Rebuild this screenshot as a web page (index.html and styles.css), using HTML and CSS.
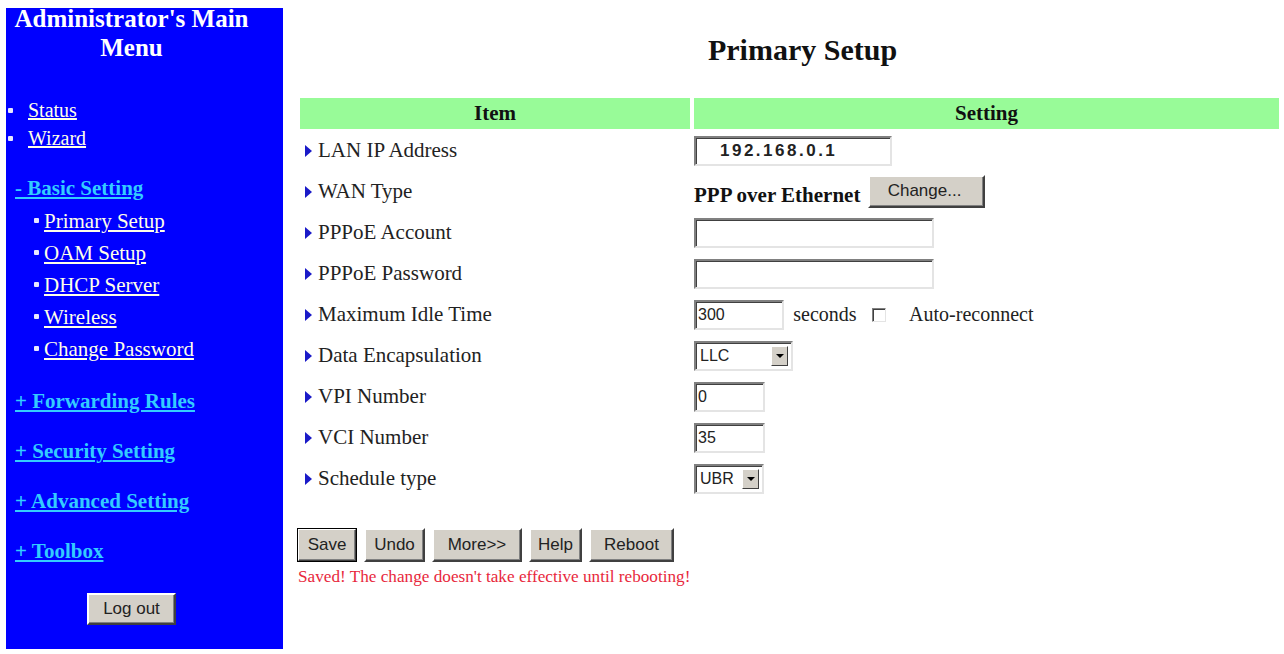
FILE: index.html
```html
<!DOCTYPE html>
<html lang="en">
<head>
    <meta charset="UTF-8">
    <title>Primary Setup</title>
    <link rel="stylesheet" href="styles.css">
</head>
<body>
    <div class="page">
        <nav class="menu">
            <h2 class="menu-title">Administrator's Main<br>Menu</h2>
            <ul class="top-links">
                <li><a href="#">Status</a></li>
                <li><a href="#">Wizard</a></li>
            </ul>
            <a class="group" href="#">- Basic Setting</a>
            <ul class="sub-links">
                <li><a href="#">Primary Setup</a></li>
                <li><a href="#">OAM Setup</a></li>
                <li><a href="#">DHCP Server</a></li>
                <li><a href="#">Wireless</a></li>
                <li><a href="#">Change Password</a></li>
            </ul>
            <a class="group" href="#">+ Forwarding Rules</a>
            <a class="group" href="#">+ Security Setting</a>
            <a class="group" href="#">+ Advanced Setting</a>
            <a class="group" href="#">+ Toolbox</a>
            <div class="logout">
                <button class="btn">Log out</button>
            </div>
        </nav>

        <main class="content">
            <h1>Primary Setup</h1>
            <table class="setup">
                <tr>
                    <th class="col-item">Item</th>
                    <th>Setting</th>
                </tr>
                <tr>
                    <td class="label">LAN IP Address</td>
                    <td><input class="field ip" type="text" value="192.168.0.1"></td>
                </tr>
                <tr>
                    <td class="label">WAN Type</td>
                    <td><b class="wan">PPP over Ethernet</b> <button class="btn change">Change...</button></td>
                </tr>
                <tr>
                    <td class="label">PPPoE Account</td>
                    <td><input class="field wide" type="text"></td>
                </tr>
                <tr>
                    <td class="label">PPPoE Password</td>
                    <td><input class="field wide" type="password"></td>
                </tr>
                <tr>
                    <td class="label">Maximum Idle Time</td>
                    <td>
                        <input class="field idle" type="text" value="300">
                        <span class="note">seconds</span>
                        <span class="check"></span>
                        <span class="note">Auto-reconnect</span>
                    </td>
                </tr>
                <tr>
                    <td class="label">Data Encapsulation</td>
                    <td><span class="select encap"><span class="val">LLC</span><span class="arrow"></span></span></td>
                </tr>
                <tr>
                    <td class="label">VPI Number</td>
                    <td><input class="field short" type="text" value="0"></td>
                </tr>
                <tr>
                    <td class="label">VCI Number</td>
                    <td><input class="field short" type="text" value="35"></td>
                </tr>
                <tr>
                    <td class="label">Schedule type</td>
                    <td><span class="select sched"><span class="val">UBR</span><span class="arrow"></span></span></td>
                </tr>
            </table>

            <div class="actions">
                <button class="btn default save">Save</button>
                <button class="btn undo">Undo</button>
                <button class="btn more">More&gt;&gt;</button>
                <button class="btn help">Help</button>
                <button class="btn reboot">Reboot</button>
            </div>
            <p class="saved">Saved! The change doesn't take effective until rebooting!</p>
        </main>
    </div>
</body>
</html>
```

FILE: styles.css
```css
body {
    margin: 0;
    background-color: white;
    font-family: "Liberation Serif", "Times New Roman", serif;
}
.page {
    display: flex;
    align-items: flex-start;
}

/* left menu */
.menu {
    width: 277px;
    height: 641px;
    margin: 8px 0 0 6px;
    background-color: #0000ff;
    box-sizing: border-box;
}
.menu-title {
    margin: -4px 0 0;
    padding-right: 26px;
    color: white;
    font-size: 25px;
    line-height: 29px;
    text-align: center;
}
.menu a {
    color: #ffffe8;
}
.top-links {
    list-style: none;
    margin: 34px 0 0;
    padding: 0;
}
.top-links li {
    position: relative;
    padding-left: 22px;
    font-size: 20px;
    line-height: 28px;
}
.top-links li::before,
.sub-links li::before {
    content: "";
    position: absolute;
    width: 5px;
    height: 5px;
    border-radius: 1px;
    background-color: #e8e8ff;
}
.top-links li::before {
    left: 2px;
    top: 12px;
}
.sub-links {
    list-style: none;
    margin: 0;
    padding: 0;
}
.sub-links li {
    position: relative;
    padding-left: 38px;
    font-size: 21px;
    line-height: 32px;
}
.sub-links li::before {
    left: 28px;
    top: 13px;
}
.menu .group {
    display: block;
    margin-top: 16px;
    padding-left: 9px;
    color: #33ccff;
    font-weight: bold;
    font-size: 21px;
    line-height: 34px;
}
.top-links + .group {
    margin-top: 19px;
}
.sub-links + .group {
    margin-top: 19px;
}
.logout {
    margin-top: 25px;
    padding-right: 26px;
    text-align: center;
}
.logout .btn {
    width: 89px;
    height: 32px;
    font-size: 17px;
}

/* buttons and fields */
.btn {
    background-color: #d4d0c8;
    font-family: "Liberation Sans", Arial, sans-serif;
    font-size: 17px;
    color: #222;
    height: 34px;
    padding: 0;
    border: 2px solid;
    border-color: #ffffff #404040 #404040 #ffffff;
    box-shadow: inset -1px -1px #808080;
}
.btn.default {
    outline: 1px solid #000;
    outline-offset: -1px;
}
.field {
    height: 30px;
    box-sizing: border-box;
    padding: 2px 2px;
    font-family: "Liberation Sans", Arial, sans-serif;
    font-size: 16px;
    color: #222;
    border: 2px solid;
    border-color: #808080 #e4e4e4 #e4e4e4 #808080;
    box-shadow: inset 1px 1px #404040;
    vertical-align: middle;
}
.field.ip {
    width: 198px;
    padding-left: 24px;
    font-size: 17px;
    font-weight: bold;
    letter-spacing: 2.5px;
}
.field.wide {
    width: 240px;
}
.field.idle {
    width: 90px;
}
.field.short {
    width: 71px;
}
.select {
    display: inline-flex;
    align-items: center;
    justify-content: space-between;
    height: 30px;
    box-sizing: border-box;
    padding: 0 3px 0 4px;
    font-family: "Liberation Sans", Arial, sans-serif;
    font-size: 16px;
    color: #222;
    border: 2px solid;
    border-color: #808080 #e4e4e4 #e4e4e4 #808080;
    box-shadow: inset 1px 1px #404040;
    vertical-align: middle;
}
.select.encap {
    width: 99px;
}
.select.sched {
    width: 70px;
}
.select .arrow {
    position: relative;
    width: 17px;
    height: 20px;
    box-sizing: border-box;
    background-color: #d4d0c8;
    border: 1px solid;
    border-color: #ffffff #404040 #404040 #ffffff;
}
.select .arrow::after {
    content: "";
    position: absolute;
    left: 4px;
    top: 7px;
    border-left: 4px solid transparent;
    border-right: 4px solid transparent;
    border-top: 4px solid #000;
}

/* main content */
.content {
    flex: 1;
    padding: 0 5px 0 17px;
}
h1 {
    margin: 32px 0 28px;
    padding-left: 26px;
    font-size: 30px;
    line-height: 36px;
    text-align: center;
    color: #111;
}
.setup {
    width: 100%;
    border-spacing: 0 2px;
    margin: 0;
}
.setup th {
    height: 31px;
    padding: 0;
    background-color: #98fb98;
    font-size: 21px;
    color: #111;
    border-left: 4px solid white;
}
.setup th.col-item {
    width: 390px;
    border-left: none;
}
.setup td {
    height: 39px;
    padding: 0;
    font-size: 21px;
    color: #222;
}
.setup td:last-child {
    padding-left: 4px;
}
.label {
    padding-left: 18px !important;
    position: relative;
}
.label::before {
    content: "";
    position: absolute;
    left: 5px;
    top: 14px;
    border-top: 6px solid transparent;
    border-bottom: 6px solid transparent;
    border-left: 7px solid #1a1ac8;
}
.wan {
    font-size: 21px;
    color: #111;
    vertical-align: middle;
}
.btn.change {
    width: 117px;
    height: 33px;
    margin-left: 2px;
    text-align: left;
    padding-left: 18px;
    vertical-align: 4px;
}
.note {
    font-size: 20px;
    margin-left: 4px;
    vertical-align: middle;
}
.check {
    display: inline-block;
    width: 14px;
    height: 14px;
    box-sizing: border-box;
    margin: 0 14px 0 10px;
    background-color: white;
    border: 1px solid;
    border-color: #808080 #e4e4e4 #e4e4e4 #808080;
    box-shadow: inset 1px 1px #404040;
    vertical-align: middle;
}
.actions {
    display: flex;
    gap: 7px;
    margin-top: 28px;
}
.actions .save {
    width: 60px;
    margin-left: -3px;
}
.actions .undo {
    width: 61px;
}
.actions .more {
    width: 90px;
}
.actions .help {
    width: 53px;
}
.actions .reboot {
    width: 85px;
}
.saved {
    margin: 5px 0 0 -2px;
    color: #e8283c;
    font-size: 17.2px;
}
```
